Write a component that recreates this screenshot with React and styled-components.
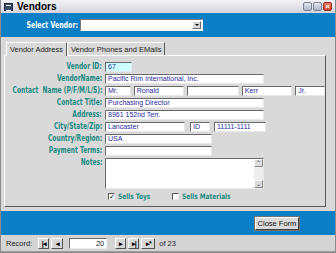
import React from 'react';
import styled, { createGlobalStyle } from 'styled-components';

const GlobalStyle = createGlobalStyle`
  html, body { margin: 0; padding: 0; background: #ffffff; }
  body { font-family: "Liberation Sans", Arial, sans-serif; }
  * { box-sizing: border-box; }
`;

const Window = styled.div`
  width: 336px;
  height: 253px;
  display: flex;
  flex-direction: column;
  background: #d9d9d9;
  border: 1px solid #8a8a8a;
  border-top: none;
  overflow: hidden;
`;

const TitleBar = styled.div`
  height: 13px;
  display: flex;
  align-items: center;
  padding: 0 3px 0 3px;
  background: linear-gradient(#f2f2f6, #d4d4dc);
  gap: 4px;
  .title {
    font-weight: bold;
    font-size: 10px;
    color: #000;
    flex: 1;
  }
`;

const AppIcon = styled.div`
  width: 9px;
  height: 8px;
  background: #3c4a6a;
  border: 1px solid #1e2a44;
  position: relative;
  &::after {
    content: '';
    position: absolute;
    left: 1px; top: 1px; width: 5px; height: 4px;
    border-top: 1px solid #fff;
    border-bottom: 1px solid #fff;
  }
`;

const WinButtons = styled.div`
  display: flex;
  gap: 1px;
`;

const WinButton = styled.div`
  width: 9px;
  height: 9px;
  border-radius: 2px;
  border: 1px solid ${p => (p.$close ? '#9c3020' : '#7a8298')};
  background: ${p => (p.$close ? 'linear-gradient(#ee7a62, #c8402a)' : 'linear-gradient(#e4e8f2, #aeb4c8)')};
  display: flex;
  align-items: center;
  justify-content: center;
  color: #fff;
  font-size: 8px;
  font-weight: bold;
  line-height: 1;
`;

const BlueBar = styled.div`
  background: #0b7fc6;
  height: ${p => p.$h}px;
  display: flex;
  align-items: center;
  justify-content: ${p => p.$justify || 'flex-start'};
  padding: ${p => p.$pad || '0'};
`;

const HeaderLabel = styled.span`
  width: 79px;
  padding-right: 2px;
  display: flex;
  justify-content: flex-end;
  span {
    font-family: "DejaVu Sans", sans-serif;
    font-weight: bold;
    font-size: 8px;
    color: #fff;
    white-space: nowrap;
    transform: scaleX(0.78);
    transform-origin: right center;
  }
`;

const Combo = styled.div`
  width: 123px;
  height: 12px;
  background: #fff;
  border: 1px solid;
  border-color: #7a7a7a #f0f0f0 #f0f0f0 #7a7a7a;
  display: flex;
  justify-content: flex-end;
  padding: 1px;
`;

const ComboButton = styled.div`
  width: 9px;
  height: 8px;
  background: #d8d8d8;
  border: 1px solid;
  border-color: #fff #6a6a6a #6a6a6a #fff;
  position: relative;
  &::after {
    content: '';
    position: absolute;
    left: 2px; top: 2px;
    border-left: 2px solid transparent;
    border-right: 2px solid transparent;
    border-top: 2px solid #000;
  }
`;

const Body = styled.div`
  flex: 1;
  padding: 4px 9px 4px 3px;
  display: flex;
  flex-direction: column;
`;

const TabStrip = styled.div`
  display: flex;
  align-items: flex-end;
  height: 14px;
  padding-left: 2px;
`;

const Tab = styled.div`
  height: ${p => (p.$active ? 14 : 13)}px;
  padding: 0 3px;
  font-size: 7.5px;
  line-height: 13px;
  color: #222;
  background: #d9d9d9;
  border: 1px solid;
  border-color: #ffffff #5a5a5a #d9d9d9 #ffffff;
  border-bottom: none;
  margin-bottom: ${p => (p.$active ? -1 : 0)}px;
  position: relative;
  z-index: ${p => (p.$active ? 1 : 0)};
  white-space: nowrap;
`;

const TabPanel = styled.div`
  flex: 1;
  border: 1px solid;
  border-color: #ffffff #5a5a5a #5a5a5a #ffffff;
  padding: 6px 0 0 0;
  display: flex;
  flex-direction: column;
  gap: 2px;
`;

const Row = styled.div`
  display: flex;
  align-items: flex-start;
  height: ${p => p.$h || 10}px;
  gap: 3px;
`;

const Label = styled.label`
  width: 97px;
  flex-shrink: 0;
  display: flex;
  justify-content: flex-end;
  span {
    font-family: "DejaVu Sans", sans-serif;
    font-weight: bold;
    font-size: 8px;
    line-height: 10px;
    color: #1b8b82;
    white-space: nowrap;
    transform: scaleX(0.74);
    transform-origin: right center;
  }
`;

const Field = styled.div`
  width: ${p => p.$w}px;
  height: ${p => p.$h || 10}px;
  margin-right: ${p => p.$gap || 0}px;
  background: ${p => (p.$highlight ? '#ccffff' : '#ffffff')};
  border: 1px solid;
  border-color: #6a6a6a #e8e8e8 #e8e8e8 #6a6a6a;
  font-size: 7px;
  line-height: 8px;
  color: #2a2aa0;
  padding-left: 2px;
  white-space: nowrap;
  overflow: hidden;
  display: flex;
  justify-content: space-between;
`;

const ScrollBar = styled.div`
  width: 9px;
  display: flex;
  flex-direction: column;
  justify-content: space-between;
  background: #eeeeee;
`;

const ScrollArrow = styled.div`
  height: 8px;
  background: #dcdcdc;
  border: 1px solid;
  border-color: #fff #8a8a8a #8a8a8a #fff;
  font-size: 6px;
  line-height: 6px;
  text-align: center;
  color: #333;
`;

const CheckRow = styled.div`
  display: flex;
  align-items: center;
  padding-left: 103px;
  margin-top: 1px;
  height: 9px;
`;

const CheckItem = styled.div`
  display: flex;
  align-items: center;
  gap: 3px;
  width: ${p => p.$w}px;
  span {
    font-family: "DejaVu Sans", sans-serif;
    font-weight: bold;
    font-size: 7.5px;
    color: #1b8b82;
    white-space: nowrap;
    transform: scaleX(0.78);
    transform-origin: left center;
  }
`;

const CheckBox = styled.div`
  width: 7px;
  height: 7px;
  flex-shrink: 0;
  background: #fff;
  border: 1px solid;
  border-color: #5a5a5a #e8e8e8 #e8e8e8 #5a5a5a;
  font-size: 7px;
  line-height: 5px;
  color: #000;
  text-align: center;
`;

const CloseButton = styled.div`
  width: 44px;
  height: 13px;
  background: #dadada;
  border: 1px solid;
  border-color: #ffffff #404040 #404040 #ffffff;
  box-shadow: 0 0 0 1px #707070;
  font-size: 7.5px;
  line-height: 11px;
  text-align: center;
  color: #111;
`;

const RecordBar = styled.div`
  height: 17px;
  display: flex;
  align-items: center;
  padding-left: 5px;
  font-size: 7.5px;
  color: #222;
  background: #d4d4d4;
  border-bottom: 1px solid #9a9a9a;
  gap: 2px;
  .label { margin-right: 4px; }
  .of { margin-left: 2px; }
`;

const NavButton = styled.div`
  width: ${p => p.$w || 11}px;
  height: 11px;
  background: #d8d8d8;
  border: 1px solid;
  border-color: #ffffff #505050 #505050 #ffffff;
  font-size: 7px;
  line-height: 9px;
  text-align: center;
  font-weight: bold;
  color: #000;
  letter-spacing: -1px;
`;

const RecordInput = styled.div`
  width: 38px;
  height: 11px;
  margin: 0 6px 0 4px;
  background: #fff;
  border: 1px solid;
  border-color: #6a6a6a #eee #eee #6a6a6a;
  text-align: right;
  padding-right: 2px;
  font-size: 7.5px;
  line-height: 9px;
`;

const FormRow = ({ label, h, children }) => (
  <Row $h={h}>
    <Label><span>{label}</span></Label>
    {children}
  </Row>
);

const App = () => {
  return (
    <>
      <GlobalStyle />
      <Window>
        <TitleBar>
          <AppIcon />
          <span className="title">Vendors</span>
          <WinButtons>
            <WinButton />
            <WinButton />
            <WinButton $close>×</WinButton>
          </WinButtons>
        </TitleBar>

        <BlueBar $h={24}>
          <HeaderLabel><span>Select Vendor:</span></HeaderLabel>
          <Combo>
            <ComboButton />
          </Combo>
        </BlueBar>

        <Body>
          <TabStrip>
            <Tab $active>Vendor Address</Tab>
            <Tab>Vendor Phones and EMails</Tab>
          </TabStrip>
          <TabPanel>
            <FormRow label="Vendor ID:">
              <Field $w={27} $highlight>67</Field>
            </FormRow>
            <FormRow label="VendorName:">
              <Field $w={159}>Pacific Rim International, Inc.</Field>
            </FormRow>
            <FormRow label={'Contact\u00a0 Name (P/F/M/L/S):'}>
              <Field $w={26}>Mr.</Field>
              <Field $w={51}>Ronald</Field>
              <Field $w={52}></Field>
              <Field $w={51}>Kerr</Field>
              <Field $w={30}>Jr.</Field>
            </FormRow>
            <FormRow label="Contact Title:">
              <Field $w={159}>Purchasing Director</Field>
            </FormRow>
            <FormRow label="Address:">
              <Field $w={159}>8961 152nd Terr.</Field>
            </FormRow>
            <FormRow label="City/State/Zip:">
              <Field $w={80} $gap={2}>Lancaster</Field>
              <Field $w={20} $gap={1}>ID</Field>
              <Field $w={52}>11111-1111</Field>
            </FormRow>
            <FormRow label="Country/Region:">
              <Field $w={107}>USA</Field>
            </FormRow>
            <FormRow label="Payment Terms:">
              <Field $w={107}></Field>
            </FormRow>
            <FormRow label="Notes:" h={31}>
              <Field $w={159} $h={31}>
                <span />
                <ScrollBar>
                  <ScrollArrow>&#8963;</ScrollArrow>
                  <ScrollArrow>&#8964;</ScrollArrow>
                </ScrollBar>
              </Field>
            </FormRow>
            <CheckRow>
              <CheckItem $w={64}>
                <CheckBox>✓</CheckBox>
                <span>Sells Toys</span>
              </CheckItem>
              <CheckItem $w={90}>
                <CheckBox />
                <span>Sells Materials</span>
              </CheckItem>
            </CheckRow>
          </TabPanel>
        </Body>

        <BlueBar $h={24} $justify="flex-end" $pad="0 36px 0 0">
          <CloseButton>Close Form</CloseButton>
        </BlueBar>

        <RecordBar>
          <span className="label">Record:</span>
          <NavButton>|◂</NavButton>
          <NavButton $w={12}>◂</NavButton>
          <RecordInput>20</RecordInput>
          <NavButton>▸</NavButton>
          <NavButton>▸|</NavButton>
          <NavButton $w={14}>▸*</NavButton>
          <span className="of">of 23</span>
        </RecordBar>
      </Window>
    </>
  );
};

export default App;
